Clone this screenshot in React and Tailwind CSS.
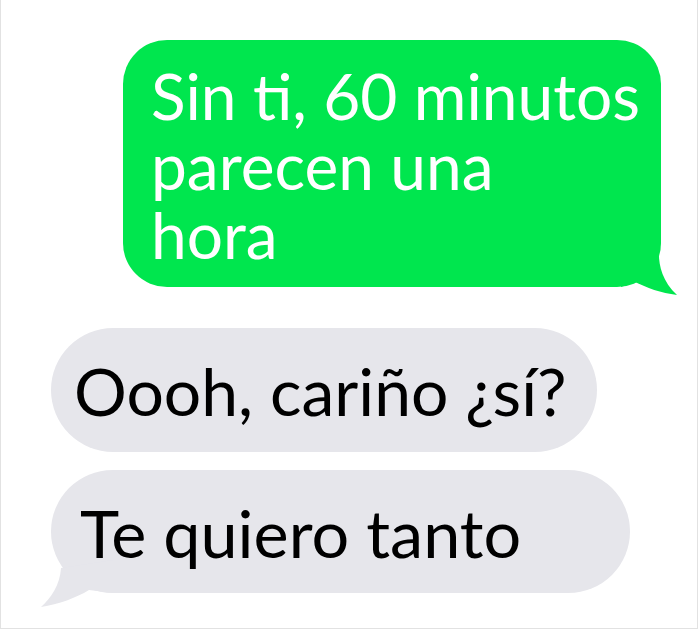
export default function App() {
	return (
		<div
			className="w-[698px] h-[629px] bg-white border-x border-b border-[#e2e2e2] flex flex-col"
			style={{ fontFamily: "Lato, 'Noto Sans', sans-serif" }}
		>
			{/* sent message */}
			<div className="relative mt-[40px] ml-[122px] w-[538px] h-[247px] rounded-[44px] bg-[#00e64e] pl-[28px] pt-[21px]">
				<p className="text-[64px] leading-[69.5px] text-white">
					Sin ti, 60 minutos
					<br />
					parecen una
					<br />
					hora
				</p>
				<svg
					className="absolute left-[498px] top-[190px]"
					width="60"
					height="68"
					viewBox="0 0 60 68"
				>
					<path
						d="M0 0 L40 0 L40 10 C37 18 34 45 56 65 C40 63 26 58 12 51 C8 54 4 56 0 57 Z"
						fill="#00e64e"
					/>
				</svg>
			</div>

			{/* received messages */}
			<div className="mt-[41px] ml-[50px] w-[546px] h-[124px] rounded-full bg-[#e6e6eb] flex items-center pl-[23px] pt-[2px]">
				<p className="text-[66px] leading-none text-black">Oooh, cariño ¿sí?</p>
			</div>

			<div className="relative mt-[18px] ml-[50px] w-[579px] h-[123px] rounded-full bg-[#e6e6eb] flex items-center pl-[29px] pt-[2px]">
				<p className="text-[66.5px] leading-none text-black">Te quiero tanto</p>
				<svg
					className="absolute left-[-12px] top-[88px]"
					width="80"
					height="52"
					viewBox="0 0 80 52"
				>
					<path
						d="M22 10 C21 27 12 40 2 49 C20 46 37 40 50 32 L74 35 L74 2 Z"
						fill="#e6e6eb"
					/>
				</svg>
			</div>
		</div>
	);
}
